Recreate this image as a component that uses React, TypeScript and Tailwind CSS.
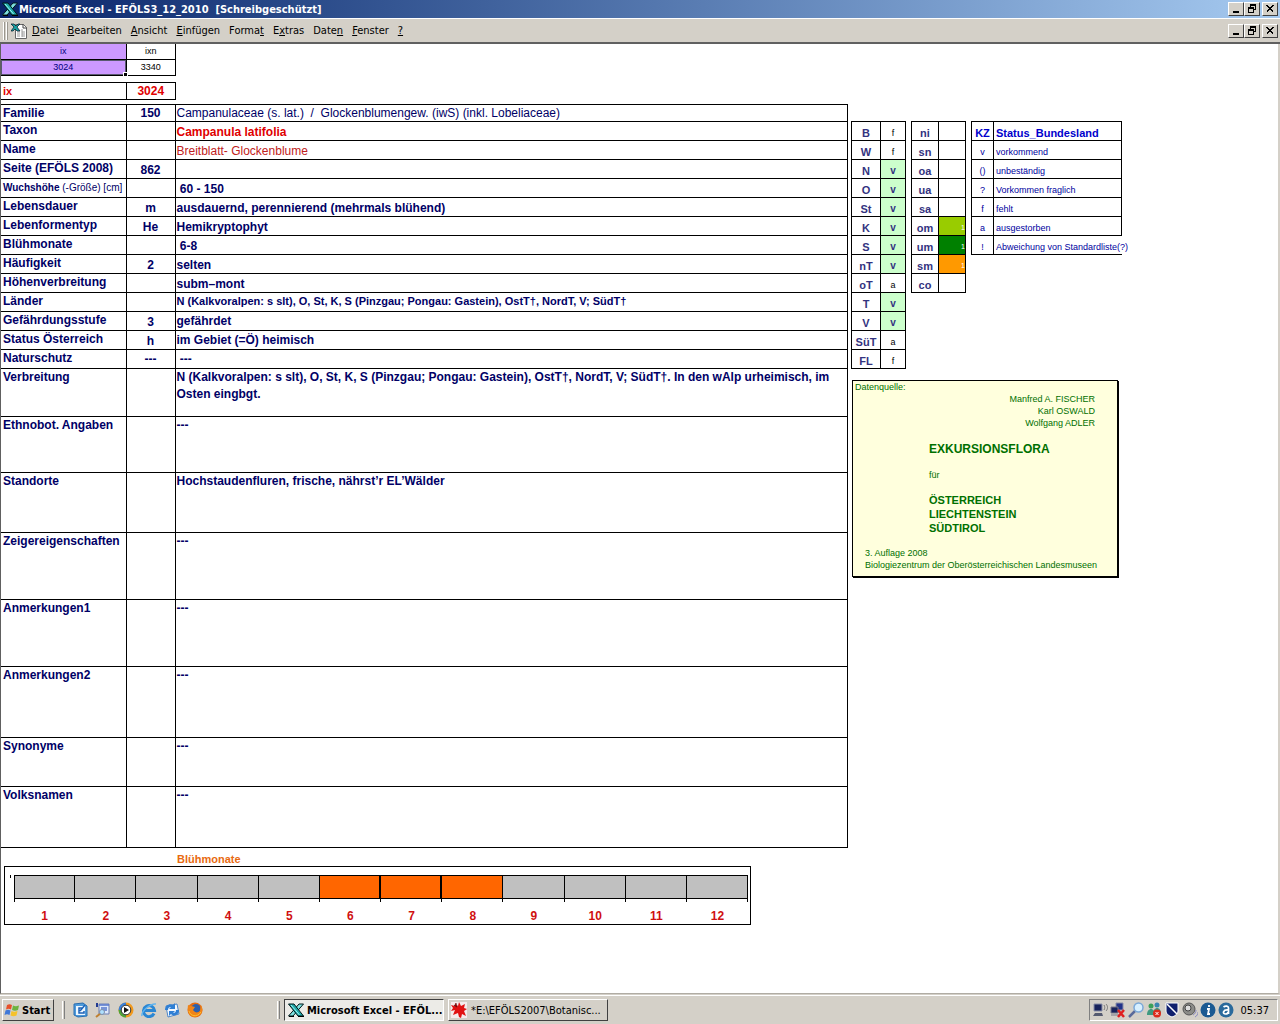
import { ReactNode } from "react";
import clsx from "clsx";

type Align = "top" | "middle" | "bottom";

type Row = {
  label: ReactNode;
  code?: string;
  value?: ReactNode;
  height: string;
  align?: Align;
  style?: string;
};

const rows: Row[] = [
  {
    label: "Familie",
    code: "150",
    value: "Campanulaceae (s. lat.)\u00a0 /\u00a0 Glockenblumengew. (iwS) (inkl. Lobeliaceae)",
    height: "h-[17px]",
    align: "bottom",
    style: "font-normal",
  },
  { label: "Taxon", value: "Campanula latifolia", height: "h-[19px]", align: "bottom", style: "text-[#e00000]" },
  { label: "Name", value: "Breitblatt- Glockenblume", height: "h-[19px]", align: "bottom", style: "font-normal text-[#c02020]" },
  { label: "Seite (EFÖLS 2008)", code: "862", height: "h-[19px]" },
  {
    label: (
      <span className="text-[10px]">
        <b>Wuchshöhe</b> <span className="font-normal">(-Größe) [cm]</span>
      </span>
    ),
    value: "\u00a060 - 150",
    height: "h-[19px]",
    align: "bottom",
  },
  { label: "Lebensdauer", code: "m", value: "ausdauernd, perennierend (mehrmals blühend)", height: "h-[19px]", align: "bottom" },
  { label: "Lebenformentyp", code: "He", value: "Hemikryptophyt", height: "h-[19px]", align: "bottom" },
  { label: "Blühmonate", value: "\u00a06-8", height: "h-[19px]", align: "bottom" },
  { label: "Häufigkeit", code: "2", value: "selten", height: "h-[19px]", align: "bottom" },
  { label: "Höhenverbreitung", value: "subm–mont", height: "h-[19px]", align: "bottom" },
  {
    label: "Länder",
    value: "N (Kalkvoralpen: s slt), O, St, K, S (Pinzgau; Pongau: Gastein), OstT†, NordT, V; SüdT†",
    height: "h-[19px]",
    style: "text-[11px]",
  },
  { label: "Gefährdungsstufe", code: "3", value: "gefährdet", height: "h-[19px]", align: "middle" },
  { label: "Status Österreich", code: "h", value: "im Gebiet (=Ö) heimisch", height: "h-[19px]", align: "middle" },
  { label: "Naturschutz", code: "---", value: "\u00a0---", height: "h-[19px]", align: "middle" },
  {
    label: "Verbreitung",
    value:
      "N (Kalkvoralpen: s slt), O, St, K, S (Pinzgau; Pongau: Gastein), OstT†, NordT, V; SüdT†. In den wAlp urheimisch, im Osten eingbgt.",
    height: "h-[48px]",
    style: "leading-[17px]",
  },
  { label: "Ethnobot. Angaben", value: "---", height: "h-[56px]" },
  { label: "Standorte", value: "Hochstaudenfluren, frische, nährst’r EL’Wälder", height: "h-[60px]" },
  { label: "Zeigereigenschaften", value: "---", height: "h-[67px]" },
  { label: "Anmerkungen1", value: "---", height: "h-[67px]" },
  { label: "Anmerkungen2", value: "---", height: "h-[71px]" },
  { label: "Synonyme", value: "---", height: "h-[49px]" },
  { label: "Volksnamen", value: "---", height: "h-[61px]" },
];

const regions = [
  ["B", "f"],
  ["W", "f"],
  ["N", "v"],
  ["O", "v"],
  ["St", "v"],
  ["K", "v"],
  ["S", "v"],
  ["nT", "v"],
  ["oT", "a"],
  ["T", "v"],
  ["V", "v"],
  ["SüT", "a"],
  ["FL", "f"],
];

const zones = [
  ["ni", ""],
  ["sn", ""],
  ["oa", ""],
  ["ua", ""],
  ["sa", ""],
  ["om", "bg-[#99cc00]"],
  ["um", "bg-[#008000]"],
  ["sm", "bg-[#ff9900]"],
  ["co", ""],
];

const legend = [
  ["v", "vorkommend"],
  ["()", "unbeständig"],
  ["?", "Vorkommen fraglich"],
  ["f", "fehlt"],
  ["a", "ausgestorben"],
  ["!", "Abweichung von Standardliste(?)"],
];

const menus = [
  ["", "D", "atei"],
  ["", "B", "earbeiten"],
  ["", "A", "nsicht"],
  ["", "E", "infügen"],
  ["Forma", "t", ""],
  ["E", "x", "tras"],
  ["Date", "n", ""],
  ["", "F", "enster"],
  ["", "?", ""],
];

const months = [1, 2, 3, 4, 5, 6, 7, 8, 9, 10, 11, 12];

const cell = "border border-black p-0";

const ExcelIcon = () => (
  <svg width="16" height="16" viewBox="0 0 16 16" className="shrink-0">
    <path d="M11 2h4.500L5 14H.5z" fill="#7fe0e0" stroke="#001818" />
    <path d="M.5 2H6l9.500 12H10z" fill="#1fa8a8" stroke="#001818" />
    <path d="M3 3l8.500 10" stroke="#9ff4f4" />
    <path d="M1 14.500h5M10 14.500h6" stroke="#000" />
  </svg>
);

const SheetIcon = () => (
  <svg width="16" height="16" viewBox="0 0 16 16" className="shrink-0">
    <path d="M4.500 1.500h8l3 3v11h-11z" fill="#fff" stroke="#666" />
    <path d="M12 1v4h4" fill="none" stroke="#444" />
    <path d="M6 9h3M11 9h3M6 11h3M11 11h3M6 13h3M11 13h3M11 6v8" stroke="#999" />
    <path d="M0 1h3l2 2 2-2h2L6 4l3 4H6L4 6 2 8H0l3-4z" fill="#19a0a0" stroke="#012" strokeWidth=".7" />
  </svg>
);

const WindowButtons = () => (
  <div className="flex items-center pr-0.5">
    {["Minimieren", "Wiederherstellen", "Schließen"].map((name, i) => (
      <button
        key={name}
        aria-label={name}
        className={clsx(
          "flex h-[14px] w-4 items-center justify-center border border-t-white border-l-white border-r-[#404040] border-b-[#404040] bg-[#d4d0c8]",
          i === 2 && "ml-0.5"
        )}
      >
        <svg width="12" height="10" viewBox="0 0 12 10" fill="none" stroke="#000" shapeRendering="crispEdges">
          {i === 0 && <path d="M3 8h6" strokeWidth="2" />}
          {i === 1 && (
            <>
              <path d="M4 1h6M2 4h6" strokeWidth="2" />
              <path d="M4.500 1v3M9.500 1v4.500H8M2.500 4v4.500h5V4" />
            </>
          )}
          {i === 2 && <path d="M2.500 1.500l7 7M9.500 1.500l-7 7M3.500 1.500l6 6M8.500 1.500l-6 6" />}
        </svg>
      </button>
    ))}
  </div>
);

const TitleBar = () => (
  <header className="flex h-[18px] items-center justify-between bg-linear-to-r from-[#0a246a] to-[#a6caf0] pl-0.5">
    <div className="flex items-center gap-px text-[11px] font-bold text-white">
      <ExcelIcon />
      <h1 className="pt-0.5 whitespace-pre">{"Microsoft Excel - EFÖLS3_12_2010  [Schreibgeschützt]"}</h1>
    </div>
    <WindowButtons />
  </header>
);

const MenuBar = () => (
  <nav className="flex h-[26px] items-center justify-between border-t border-b-2 border-t-white border-b-[#606060] bg-[#d4d0c8]">
    <div className="flex items-center text-[11px]">
      <div className="mx-[3px] flex gap-px">
        <i className="h-[18px] w-0.5 border-l border-white bg-[#9a978f]" />
        <i className="h-[18px] w-0.5 border-l border-white bg-[#9a978f]" />
      </div>
      <SheetIcon />
      <div className="ml-[5px] flex gap-[9px] pt-0.5">
        {menus.map(([before, key, after]) => (
          <button key={before + key + after}>
            {before}
            <u>{key}</u>
            {after}
          </button>
        ))}
      </div>
    </div>
    <WindowButtons />
  </nav>
);

const IndexTables = () => (
  <>
    <table className="w-[175px] table-fixed border-collapse text-center text-[9px] leading-3">
      <colgroup>
        <col className="w-[125px]" />
        <col />
      </colgroup>
      <tbody>
        <tr className="h-[15px]">
          <td className="border-r border-b border-black bg-[#cc99ff] p-0 text-[#000080]">ix</td>
          <td className="border-r border-b border-black p-0">ixn</td>
        </tr>
        <tr className="h-4">
          <td className="relative border border-l-0 border-black bg-[#cc99ff] p-0 text-[#000080]">
            <div className="h-[15px] border border-[#5a5a70] leading-[13px]">3024</div>
            <i className="absolute -right-0.5 -bottom-0.5 size-[5px] border border-white bg-black" />
          </td>
          <td className={cell}>3340</td>
        </tr>
      </tbody>
    </table>
    <table className="mt-[6px] w-[175px] table-fixed border-collapse font-bold leading-4 text-[#e00000]">
      <colgroup>
        <col className="w-[125px]" />
        <col />
      </colgroup>
      <tbody>
        <tr className="h-[17px]">
          <td className="border border-l-0 border-black p-0 pl-0.5 text-[11px]">ix</td>
          <td className="border border-black p-0 text-center text-[12px]">3024</td>
        </tr>
      </tbody>
    </table>
  </>
);

const SpeciesTable = () => (
  <table className="mt-1 w-[847px] shrink-0 table-fixed border-collapse text-[12px] font-bold leading-4 text-[#000066]">
    <colgroup>
      <col className="w-[125px]" />
      <col className="w-[49px]" />
      <col />
    </colgroup>
    <tbody>
      {rows.map((row, i) => (
        <tr key={i} className={row.height}>
          <th className="border border-l-0 border-black p-0 pl-0.5 text-left align-top whitespace-nowrap">{row.label}</th>
          <td
            className={clsx("border border-black p-0 text-center", row.code === "---" ? "align-middle" : "align-bottom")}
          >
            {row.code}
          </td>
          <td
            className={clsx(
              "border border-black p-0 pl-px",
              row.align === "bottom" && "align-bottom",
              row.align === "middle" && "align-middle",
              !row.align && "align-top",
              row.style
            )}
          >
            {row.value}
          </td>
        </tr>
      ))}
    </tbody>
  </table>
);

const SideTables = () => (
  <div className="flex items-start gap-[5px] text-center text-[10px] leading-[14px] text-[#333380]">
    <table className="w-[55px] table-fixed border-collapse">
      <colgroup>
        <col className="w-[29px]" />
        <col />
      </colgroup>
      <tbody>
        {regions.map(([name, status]) => (
          <tr key={name} className="h-[19px]">
            <th className="border border-black p-0 align-bottom text-[11px]">{name}</th>
            <td
              className={clsx(
                "border border-black p-0 align-bottom",
                status === "v" ? "bg-[#ccffcc] font-bold" : "text-[9px] text-black"
              )}
            >
              {status}
            </td>
          </tr>
        ))}
      </tbody>
    </table>
    <table className="w-[55px] table-fixed border-collapse">
      <tbody>
        {zones.map(([name, color]) => (
          <tr key={name} className="h-[19px]">
            <th className="border border-black p-0 align-bottom text-[11px]">{name}</th>
            <td className={clsx("border border-black p-0 text-right align-bottom text-[7px] text-white", color)}>
              {color && "1"}
            </td>
          </tr>
        ))}
      </tbody>
    </table>
    <table className="w-[151px] table-fixed border-collapse text-[9px] text-[#0000a0]">
      <colgroup>
        <col className="w-[22px]" />
        <col />
      </colgroup>
      <tbody>
        <tr className="h-[19px] text-[11px] text-[#0000cc]">
          <th className="border border-black p-0 align-bottom">KZ</th>
          <th className="border border-black p-0 pl-0.5 text-left align-bottom">Status_Bundesland</th>
        </tr>
        {legend.map(([sign, text]) => (
          <tr key={sign} className="h-[19px]">
            <td className="border border-black p-0 align-bottom">{sign}</td>
            <td
              className={clsx(
                "border-b border-black p-0 pl-0.5 text-left align-bottom whitespace-nowrap",
                sign !== "!" && "border-r"
              )}
            >
              {text}
            </td>
          </tr>
        ))}
      </tbody>
    </table>
  </div>
);

const SourceCard = () => (
  <section className="mt-[11px] ml-px h-[197px] w-[266px] border border-black bg-[#ffffdd] px-0.5 text-[9px] leading-3 text-[#007000] shadow-[1px_1px_0_#000]">
    <p>Datenquelle:</p>
    <div className="pr-5 text-right">
      <p>Manfred A. FISCHER</p>
      <p>Karl OSWALD</p>
      <p>Wolfgang ADLER</p>
    </div>
    <div className="mt-3 pl-[74px]">
      <h2 className="text-[12px] leading-4 font-bold">EXKURSIONSFLORA</h2>
      <p className="mt-3">für</p>
      <div className="mt-3 text-[11px] leading-[14px] font-bold">
        <p>ÖSTERREICH</p>
        <p>LIECHTENSTEIN</p>
        <p>SÜDTIROL</p>
      </div>
    </div>
    <div className="mt-3 pl-[10px]">
      <p>3. Auflage 2008</p>
      <p>Biologiezentrum der Oberösterreichischen Landesmuseen</p>
    </div>
  </section>
);

const BloomChart = () => (
  <section className="text-[12px] font-bold">
    <h2 className="mt-[3px] ml-[176px] text-[11px] leading-4 text-[#e86a10]">Blühmonate</h2>
    <div className="ml-[3px] flex h-[59px] w-[747px] items-start border border-black pt-2 pl-[5px] -mt-px">
      <i className="mr-[3px] h-[3px] w-px bg-black" />
      <div className="flex w-[734px]">
        {months.map((m) => (
          <div key={m} className="flex-1 text-center text-[#d01010]">
            <div
              className={clsx(
                "h-6 border-y border-r border-black",
                m >= 6 && m <= 8 ? "bg-[#ff6600]" : "bg-[#c0c0c0]",
                m === 1 && "border-l",
                (m === 6 || m === 7) && "border-r-2"
              )}
            />
            <div className={clsx("h-[3px] border-r border-black", m === 1 && "border-l")} />
            <p className="mt-[6px] leading-4">{m}</p>
          </div>
        ))}
      </div>
    </div>
  </section>
);

const quickLaunch = [
  {
    name: "Desktop anzeigen",
    icon: (
      <>
        <path d="M2 2l9-1 4 3v10l-9 1-4-2z" fill="#4d9bdc" stroke="#2a6db0" />
        <path d="M4 4h9v9H4z" fill="#eef7ff" />
        <path d="M11 6H7v5h5V9M8 9l5-6" fill="none" stroke="#1c62b8" strokeWidth="1.500" />
      </>
    ),
  },
  {
    name: "Suche",
    icon: (
      <>
        <path d="M4 2h10v10H4z" fill="#dfe9fb" stroke="#6b7fb5" />
        <path d="M4 3h10M6 6h6M6 8h6" stroke="#5577cc" strokeWidth="1.500" />
        <path d="M1 1h2v4H1z" fill="#223a90" />
        <path d="M1 15l5-4" stroke="#c08030" strokeWidth="2" />
        <circle cx="7" cy="10" r="2.500" fill="#aee0ff" stroke="#8090a8" />
      </>
    ),
  },
  {
    name: "Media Player",
    icon: (
      <>
        <circle cx="8" cy="8" r="7.500" fill="#f29a1d" />
        <path d="M8 .5A7.500 7.500 0 0 0 .5 8H8z" fill="#3a7fd8" />
        <path d="M.5 8A7.500 7.500 0 0 0 8 15.500V8z" fill="#4da33a" />
        <circle cx="8" cy="8" r="4.800" fill="#fff" stroke="#333" />
        <path d="M6 5l5 3-5 3z" fill="#111" />
      </>
    ),
  },
  {
    name: "Internet Explorer",
    icon: (
      <>
        <path d="M13 11.500A5.500 5.500 0 1 1 13.500 8.500H4" fill="none" stroke="#2b87d3" strokeWidth="3" />
        <path d="M1 14C0 9 10 1 15 2" fill="none" stroke="#5fb4f0" strokeWidth="1.500" />
      </>
    ),
  },
  {
    name: "Outlook Express",
    icon: (
      <>
        <path d="M2 4l11-2 2 10-11 3z" fill="#f2f8ff" stroke="#4e86c8" />
        <path d="M1 8c0-5 5-7 8-5l2-2v6H5l2-2c-2 0-3 1-3 3zM15 8c0 5-5 7-8 4l-2 2V9h6l-2 2c2 0 3-1 3-3z" fill="#2f7fd4" />
      </>
    ),
  },
  {
    name: "Firefox",
    icon: (
      <>
        <circle cx="8" cy="8" r="7.500" fill="#e66b12" />
        <circle cx="9" cy="6.500" r="4.500" fill="#2b5fae" />
        <path d="M1 3l3 1 4 1-2 3c2 3 5 3 7 1l1-6c3 5 1 11-6 12C2 15 0 9 1 3z" fill="#f08418" />
        <path d="M2 9c1 5 8 7 12 1" fill="none" stroke="#fbc02d" />
      </>
    ),
  },
];

const tray = [
  <>
    <path d="M2 2h8v7H2z" fill="#18235c" stroke="#8a90a8" />
    <path d="M3 11h7l1 3H1z" fill="#555b70" />
    <path d="M12 3c1 2 1 3 0 5M14 2c2 2 2 5 0 7" fill="none" stroke="#777" />
  </>,
  <>
    <path d="M6 1h7v7H6z" fill="#23338a" stroke="#8a90a8" />
    <path d="M1 5h7v6H1zM1 13h8" fill="#18235c" stroke="#778" />
    <path d="M8 8l6 7M14 8l-6 7" stroke="#e02020" strokeWidth="2.500" />
  </>,
  <>
    <path d="M1 15l6-6" stroke="#5a6a9a" strokeWidth="2.500" />
    <circle cx="10.500" cy="5.500" r="4.500" fill="#d8f0ff" stroke="#7aa8d8" strokeWidth="1.500" />
  </>,
  <>
    <circle cx="5" cy="4" r="2.500" fill="#3ba05a" />
    <circle cx="11" cy="3" r="2.500" fill="#3a86b0" />
    <path d="M1 13c0-8 8-8 8 0zM8 8c3-4 7-1 7 3H9z" fill="#3f9a80" />
    <circle cx="11" cy="11.500" r="4" fill="#dd2c1c" />
    <path d="M9.500 10l3 3M12.500 10l-3 3" stroke="#fff" />
  </>,
  <>
    <path d="M2 1h12v8c0 3-3 5-6 6-3-1-6-3-6-6z" fill="#10206e" stroke="#fff" />
    <path d="M3 2l10 10" stroke="#fff" strokeWidth="1.500" />
  </>,
  <>
    <circle cx="7" cy="7" r="6" fill="#8c8c88" stroke="#555" />
    <circle cx="6" cy="6" r="3" fill="#ddd" stroke="#444" />
    <path d="M11 13c2-1 3-3 3-5M13 15c2-1 3-3 3-5" fill="none" stroke="#8a8ac0" />
  </>,
  <>
    <circle cx="8" cy="8" r="7.500" fill="#1b5a92" />
    <path d="M7 7h2l-1 5h2M9 3v2" stroke="#fff" strokeWidth="1.800" fill="none" />
  </>,
  <>
    <circle cx="8" cy="8" r="7.500" fill="#2a6a9c" />
    <path d="M5.500 5c2-1.500 5-1 5 1v6M10 8c-5-.5-6 4-2.500 4 1.500 0 2.500-1 2.500-2" stroke="#fff" strokeWidth="1.700" fill="none" />
  </>,
];

const Grip = () => <i className="h-[18px] w-[3px] border-r border-l border-r-[#808080] border-l-white" />;

const TaskBar = () => (
  <footer className="flex h-[30px] items-center border-t border-[#d4d0c8] bg-[#d4d0c8] pt-px pr-0.5 pl-0.5 text-[11px] shadow-[inset_0_1px_0_#fff]">
    <button className="flex h-[22px] w-[52px] items-center gap-0.5 border border-t-white border-l-white border-r-[#404040] border-b-[#404040] pl-px font-bold">
      <svg width="16" height="16" viewBox="0 0 16 16" className="shrink-0">
        <path d="M3 3c2-1 3-1 5 0L7 7.500C5 6.500 4 6.500 2 7.500z" fill="#e8502a" />
        <path d="M9 3.500c2 1 3 1 6 0l-1 4.500c-2 1-4 1-6 0z" fill="#6cb33e" />
        <path d="M1.500 8.500c2-1 3-1 5 0L5.500 13c-2-1-3-1-5 0z" fill="#3f78d8" />
        <path d="M7.500 9c2 1 3 1 6 0l-1 4.500c-2 1-4 1-6 0z" fill="#f5c22b" />
      </svg>
      <span className="pt-0.5">Start</span>
    </button>
    <div className="ml-2 flex items-center gap-[7px]">
      <Grip />
      {quickLaunch.map(({ name, icon }) => (
        <button key={name} aria-label={name}>
          <svg width="16" height="16" viewBox="0 0 16 16">
            {icon}
          </svg>
        </button>
      ))}
    </div>
    <div className="ml-[74px] flex items-center gap-1">
      <Grip />
      <button className="flex h-[22px] w-[160px] items-center gap-[3px] border border-t-[#404040] border-l-[#404040] border-r-white border-b-white bg-[#ecebe7] pl-[3px] font-bold whitespace-nowrap">
        <ExcelIcon />
        <span className="pt-0.5">Microsoft Excel - EFÖL...</span>
      </button>
      <button className="flex h-[22px] w-[160px] items-center gap-1 border border-t-white border-l-white border-r-[#404040] border-b-[#404040] pl-0.5 whitespace-nowrap">
        <svg width="16" height="16" viewBox="0 0 16 16" className="shrink-0">
          <path d="M0 0h16v16H0z" fill="#f4ecec" />
          <path d="M4 1l3 3 1-4 2 4 4-2-1 4 3 1-3 2 2 5-4-2-1 4-2-1-1-4-5 2 2-5-4 1 2-3-2-3 4 1z" fill="#e01212" />
          <path d="M3 3l3 2M5 1v3" stroke="#501010" />
        </svg>
        <span className="pt-0.5">*E:\EFÖLS2007\Botanisc...</span>
      </button>
    </div>
    <div className="ml-auto flex h-[22px] items-center gap-0.5 border border-t-[#808080] border-l-[#808080] border-r-white border-b-white pr-2 pl-0.5">
      {tray.map((icon, i) => (
        <svg key={i} width="16" height="16" viewBox="0 0 16 16">
          {icon}
        </svg>
      ))}
      <time className="ml-1 pt-0.5">05:37</time>
    </div>
  </footer>
);

const App = () => {
  return (
    <div className="flex min-h-screen flex-col bg-white font-['DejaVu_Sans_Condensed','DejaVu_Sans',sans-serif] text-black">
      <TitleBar />
      <MenuBar />
      <main className="flex-1 border-r-2 border-b border-l border-r-[#d4d0c8] border-b-[#b0aca4] border-l-[#606060] font-['Liberation_Sans',Arial,sans-serif]">
        <IndexTables />
        <div className="flex items-start">
          <SpeciesTable />
          <div className="mt-[21px] ml-[3px]">
            <SideTables />
            <SourceCard />
          </div>
        </div>
        <BloomChart />
      </main>
      <TaskBar />
    </div>
  );
};

export default App;
